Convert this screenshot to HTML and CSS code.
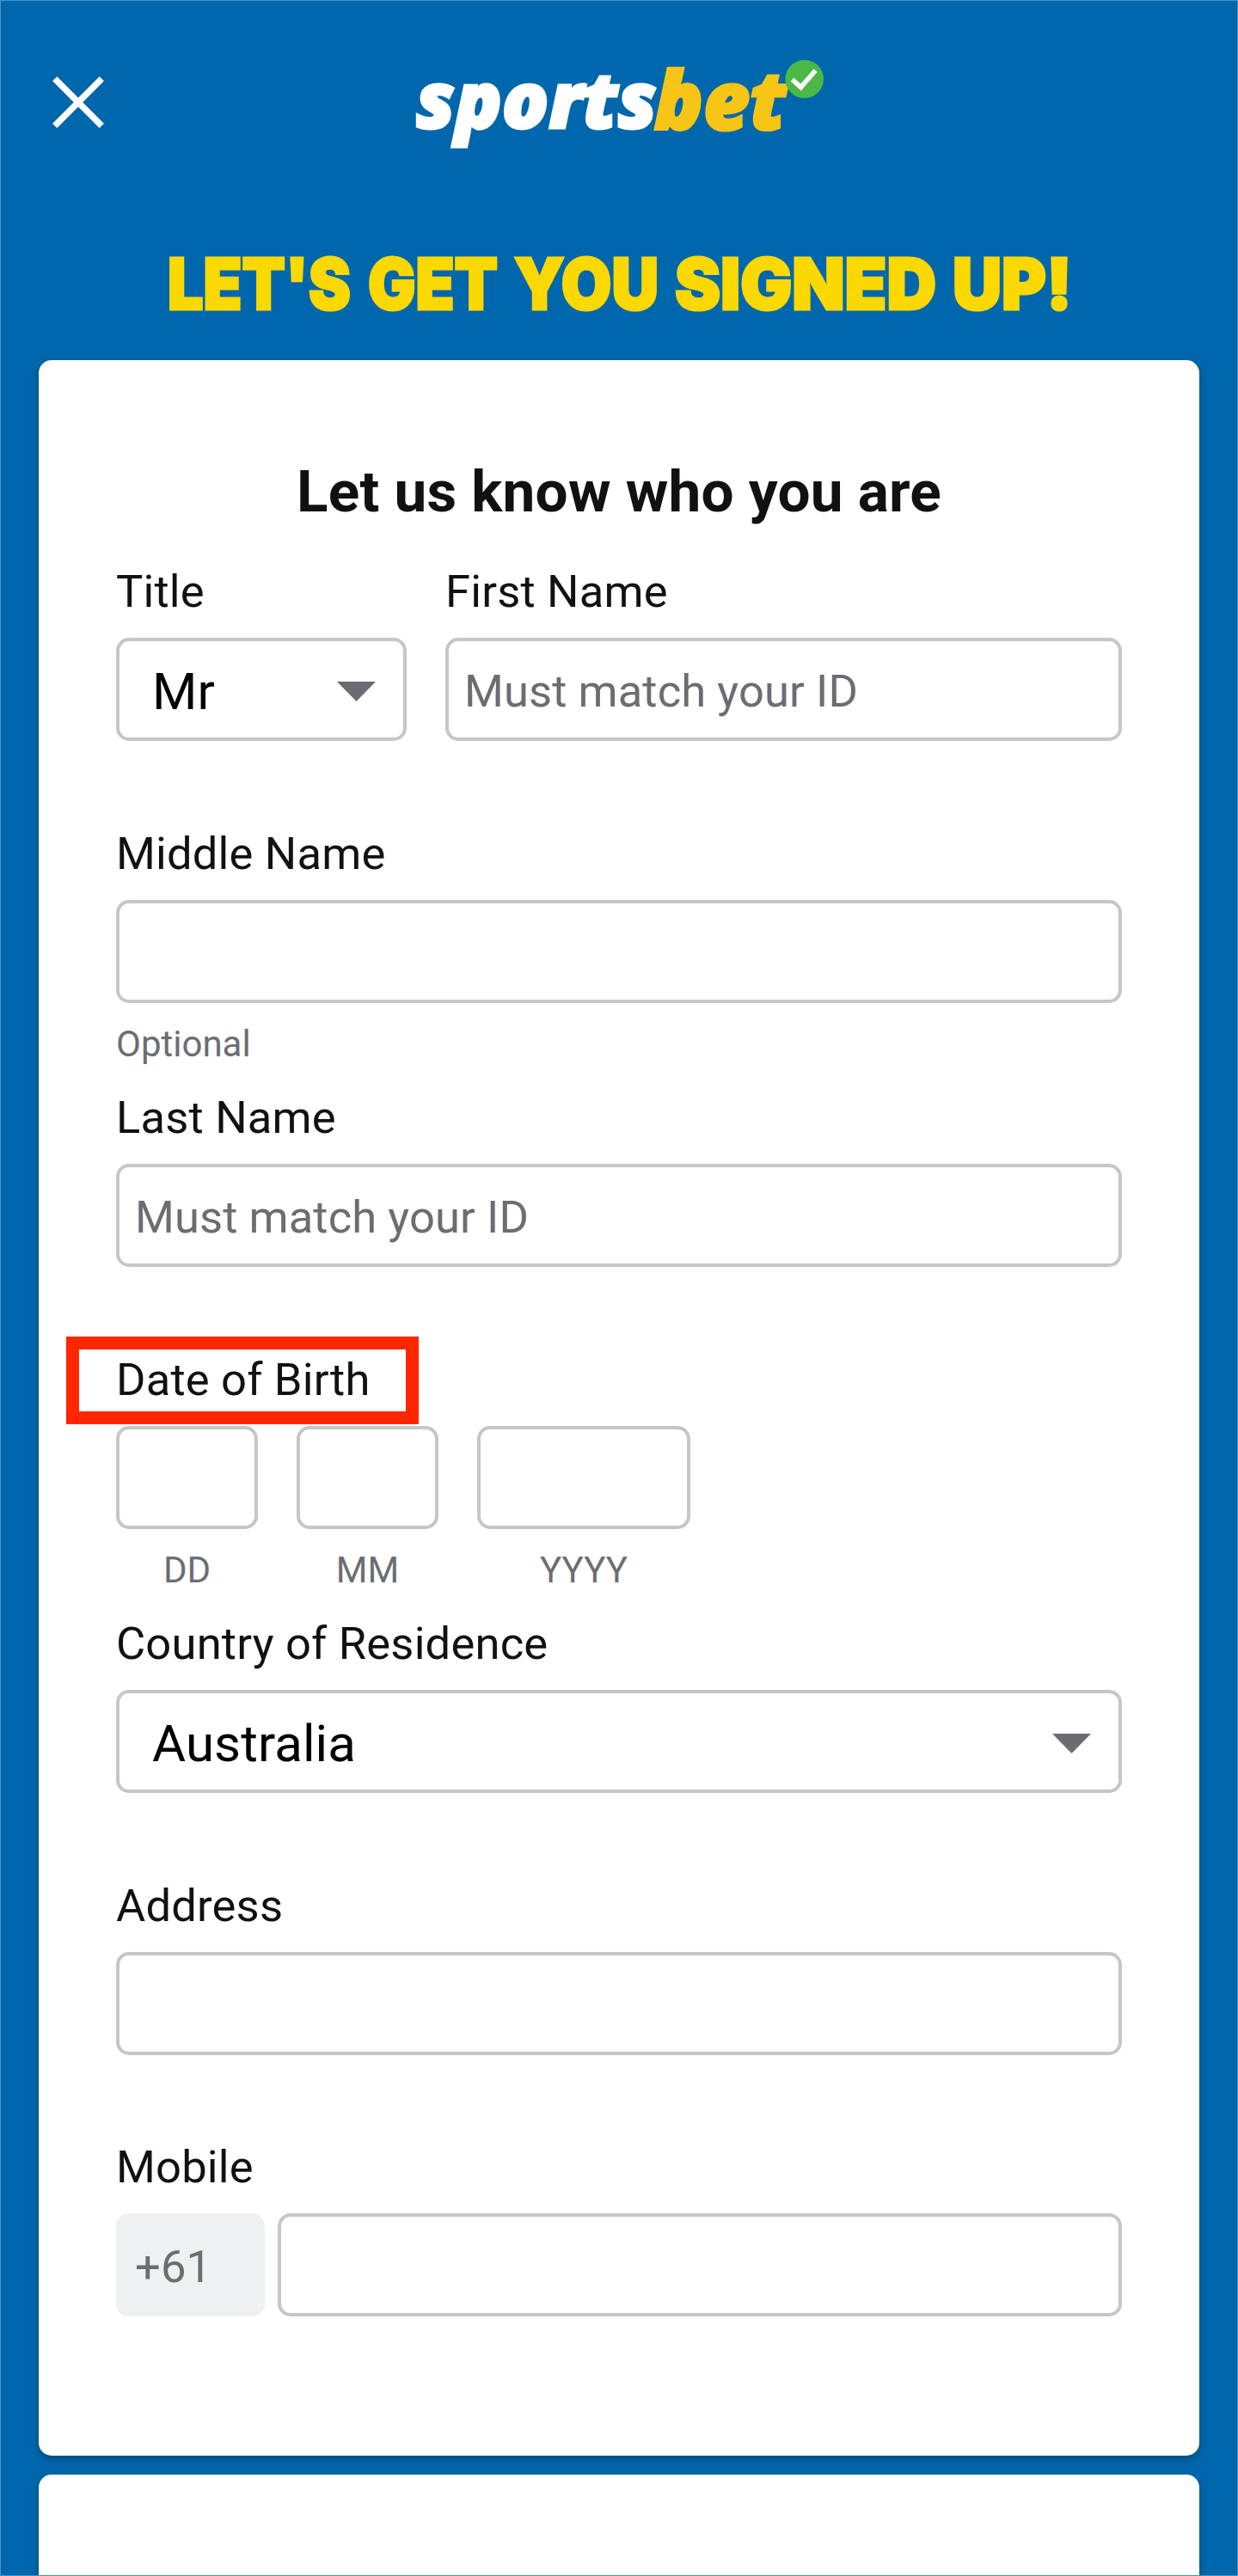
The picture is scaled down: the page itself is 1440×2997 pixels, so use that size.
FILE: index.html
```html
<!DOCTYPE html>
<html lang="en">
<head>
<meta charset="utf-8">
<title>Sportsbet – Sign up</title>
<link rel="stylesheet" href="styles.css">
</head>
<body>
<div class="page">
  <header class="header">
    <svg class="close" width="60" height="60" viewBox="0 0 60 60" aria-label="Close"><path d="M2.7 2.7 57.3 57.3M57.3 2.7 2.7 57.3" stroke="#fff" stroke-width="7.4"/></svg>
    <svg class="logo" width="500" height="160" viewBox="0 -20 500 160" role="img">
      <text class="logo-text" x="14" y="99" textLength="280" lengthAdjust="spacingAndGlyphs">sports</text>
      <text class="logo-text logo-bet" x="291" y="101" textLength="154" lengthAdjust="spacingAndGlyphs">bet</text>
      <circle cx="465.7" cy="42" r="22.3" fill="#4cb848"/>
      <path d="M451.5 42.5 461.5 51.5 478.5 32" fill="none" stroke="#fff" stroke-width="5.5"/>
    </svg>
  </header>
  <h1 class="banner">
    <svg width="1054" height="110" viewBox="0 0 1054 110">
      <text x="1" y="80" textLength="213" lengthAdjust="spacingAndGlyphs">LET'S</text>
      <text x="234" y="80" textLength="151" lengthAdjust="spacingAndGlyphs">GET</text>
      <text x="404" y="80" textLength="168" lengthAdjust="spacingAndGlyphs">YOU</text>
      <text x="591" y="80" textLength="304" lengthAdjust="spacingAndGlyphs">SIGNED</text>
      <text x="914" y="80" textLength="139" lengthAdjust="spacingAndGlyphs">UP!</text>
    </svg>
  </h1>
  <main class="card">
    <h2 class="heading">Let us know who you are</h2>
    <div class="row">
      <div class="field field-title">
        <label class="label">Title</label>
        <div class="box select"><span>Mr</span><i class="arrow"></i></div>
      </div>
      <div class="field field-first">
        <label class="label">First Name</label>
        <input class="box" placeholder="Must match your ID">
      </div>
    </div>
    <div class="field hinted">
      <label class="label">Middle Name</label>
      <input class="box">
      <p class="hint">Optional</p>
    </div>
    <div class="field">
      <label class="label">Last Name</label>
      <input class="box" placeholder="Must match your ID">
    </div>
    <div class="field hinted">
      <label class="label">Date of Birth</label>
      <div class="highlight"></div>
      <div class="dates">
        <div class="part"><input class="box"><p class="hint">DD</p></div>
        <div class="part"><input class="box"><p class="hint">MM</p></div>
        <div class="part year"><input class="box"><p class="hint">YYYY</p></div>
      </div>
    </div>
    <div class="field">
      <label class="label">Country of Residence</label>
      <div class="box select"><span>Australia</span><i class="arrow"></i></div>
    </div>
    <div class="field address">
      <label class="label">Address</label>
      <input class="box">
    </div>
    <div class="field">
      <label class="label">Mobile</label>
      <div class="phone">
        <div class="box prefix">+61</div>
        <input class="box">
      </div>
    </div>
  </main>
  <section class="card next"></section>
</div>
</body>
</html>
```
FILE: styles.css
```css
* { box-sizing: border-box; }
body { margin: 0; font-family: Roboto, "Liberation Sans", sans-serif; }
.page {
  height: 2997px;
  overflow: hidden;
  display: flex;
  flex-direction: column;
  padding: 0 44px;
  border: 1px solid #4b92c3;
  background: #0067ac;
}
.header {
  flex: none;
  height: 279px;
  display: flex;
  align-items: flex-start;
  padding: 29px 0 0 16px;
}
.close { margin-top: 59px; }
.logo { margin-left: 349px; }
.logo-text {
  font: italic 800 90px "Open Sans", Lato, sans-serif;
  fill: #fff;
  stroke: #fff;
  stroke-width: 3px;
}
.logo-bet {
  font-size: 94px;
  fill: #f7c516;
  stroke: #f7c516;
}
.banner { flex: none; margin: 0; height: 139px; padding-left: 149px; }
.banner svg { display: block; }
.banner text {
  font: 900 82px Inter, Roboto, sans-serif;
  fill: #fbd800;
  stroke: #fbd800;
  stroke-width: 3px;
}
.card {
  flex: none;
  height: 2438px;
  padding: 113px 90px 0;
  border-radius: 15px;
  background: #fff;
  box-shadow: 0 4px 8px rgba(0, 0, 0, .3);
  color: #111;
}
.next {
  height: 117px;
  margin-top: 22px;
  padding: 0;
  border-radius: 15px 15px 0 0;
}
.heading {
  margin: 0 0 46px;
  font-size: 67.5px;
  line-height: 80px;
  font-weight: 700;
  letter-spacing: .2px;
  text-align: center;
}
.row { display: flex; gap: 45px; }
.field { position: relative; padding-bottom: 101px; }
.field-title { width: 338px; }
.field-first { flex: 1; }
.hinted { height: 307px; padding-bottom: 0; }
.address { padding-bottom: 100px; }
.label {
  display: block;
  margin-bottom: 24px;
  font-size: 52.5px;
  line-height: 60px;
  letter-spacing: .2px;
}
.box {
  display: block;
  width: 100%;
  height: 120px;
  padding: 4px 18px 0;
  border: 4px solid #c5c6c7;
  border-radius: 15px;
  background: #fff;
  font: 52.5px/108px Roboto, sans-serif;
  letter-spacing: .1px;
  color: #6b6d72;
  outline: 0;
}
.box::placeholder { color: #6b6d72; opacity: 1; }
.select {
  display: flex;
  justify-content: space-between;
  padding: 3px 32px 0 38px;
  font-size: 60px;
  line-height: 112px;
  color: #000;
}
.arrow {
  width: 45px;
  height: 23px;
  margin-top: 44px;
  background: #6a6c71;
  clip-path: polygon(0 0, 100% 0, 50% 100%);
}
.hint {
  margin: 23px 0 0;
  font-size: 42px;
  line-height: 50px;
  color: #6b6d72;
}
.dates { display: flex; gap: 45px; text-align: center; }
.part { width: 165px; }
.year { width: 248px; }
.highlight {
  position: absolute;
  left: -58px;
  top: -20px;
  width: 410px;
  height: 102px;
  border: 15px solid #ff2600;
}
.phone { display: flex; gap: 15px; }
.prefix {
  flex: none;
  width: 173px;
  border-color: #eff0f2;
  background: #eff0f2;
}
```
